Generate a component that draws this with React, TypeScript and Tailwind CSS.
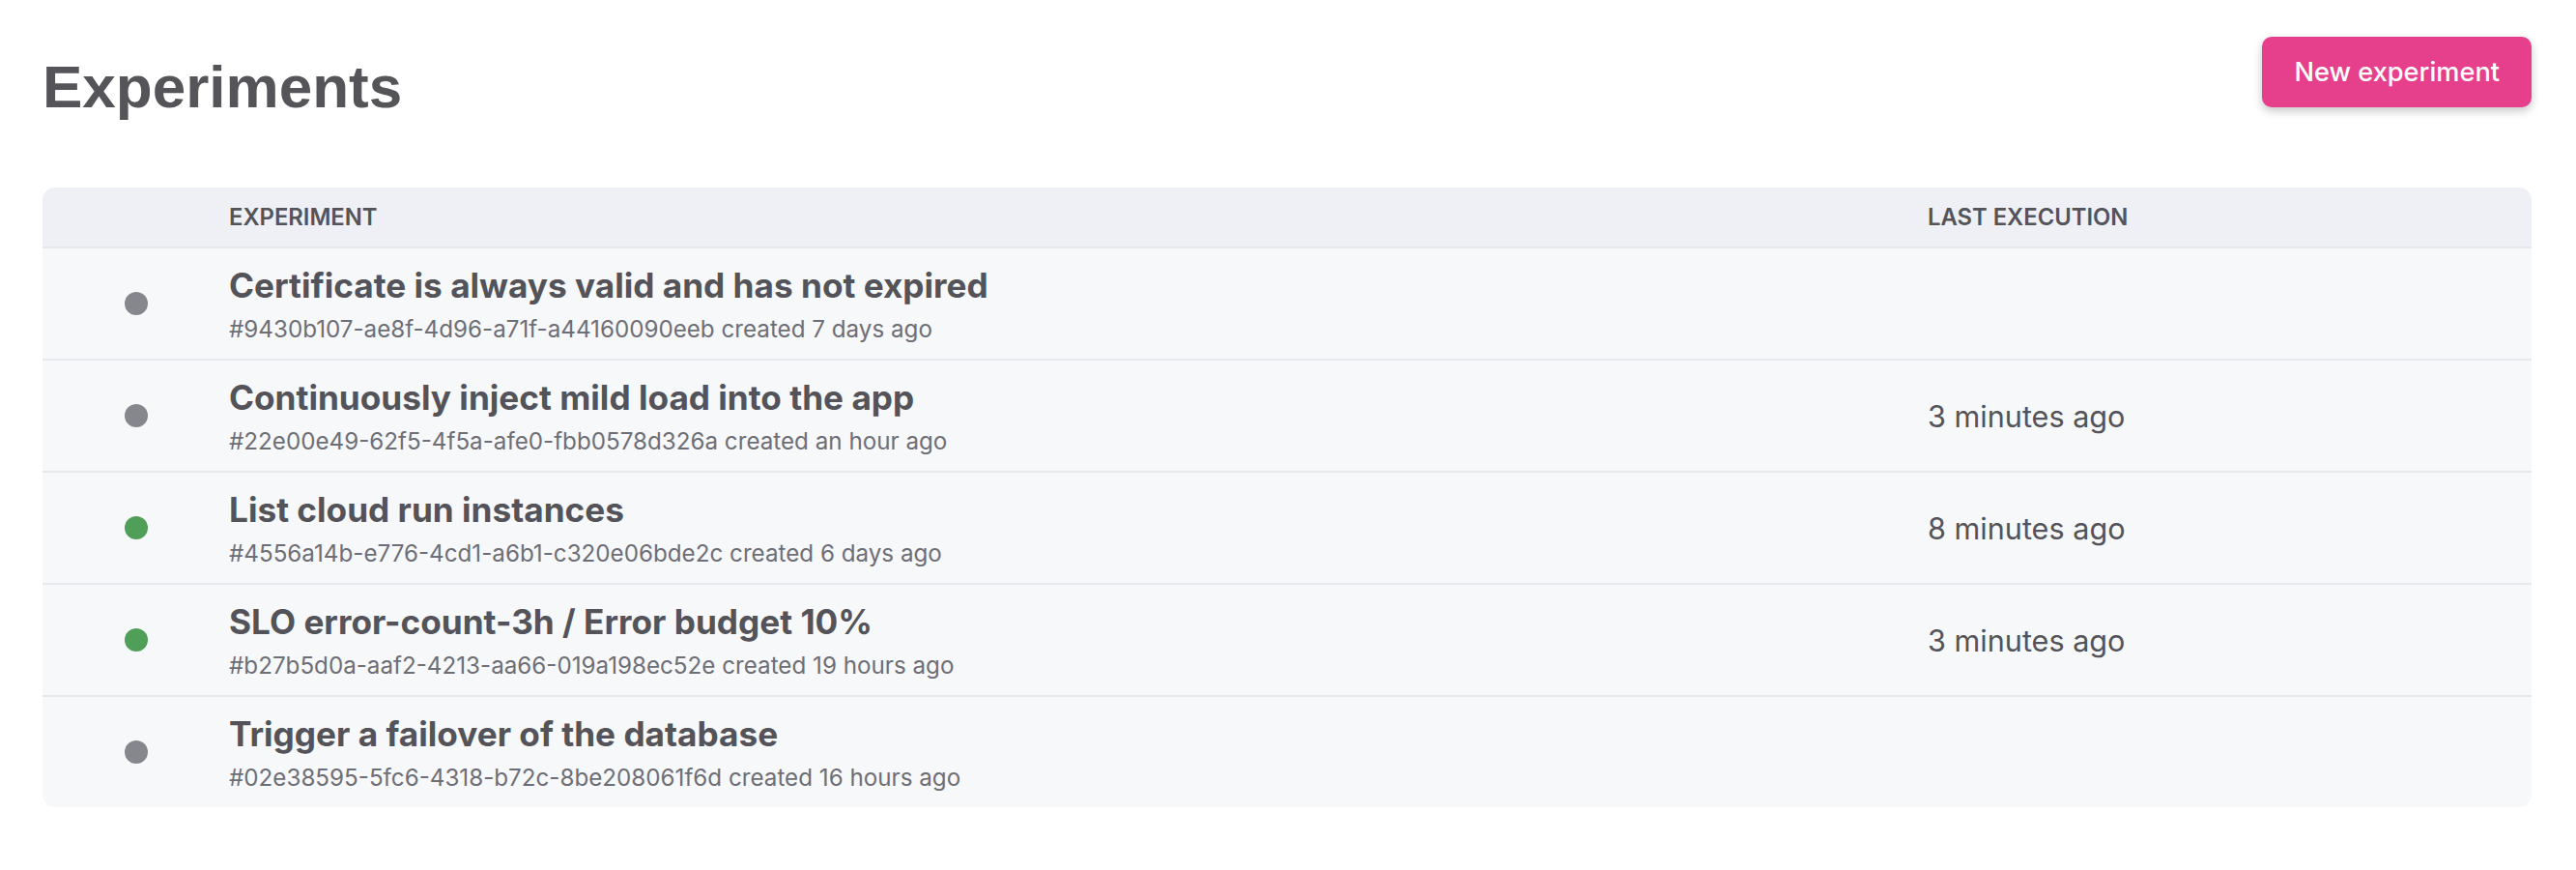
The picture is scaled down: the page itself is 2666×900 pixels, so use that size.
import React from 'react';

type Experiment = {
  id: string;
  name: string;
  created: string;
  lastExecution?: string;
  active: boolean;
};

const experiments: Experiment[] = [
  {
    id: '9430b107-ae8f-4d96-a71f-a44160090eeb',
    name: 'Certificate is always valid and has not expired',
    created: '7 days ago',
    active: false,
  },
  {
    id: '22e00e49-62f5-4f5a-afe0-fbb0578d326a',
    name: 'Continuously inject mild load into the app',
    created: 'an hour ago',
    lastExecution: '3 minutes ago',
    active: false,
  },
  {
    id: '4556a14b-e776-4cd1-a6b1-c320e06bde2c',
    name: 'List cloud run instances',
    created: '6 days ago',
    lastExecution: '8 minutes ago',
    active: true,
  },
  {
    id: 'b27b5d0a-aaf2-4213-aa66-019a198ec52e',
    name: 'SLO error-count-3h / Error budget 10%',
    created: '19 hours ago',
    lastExecution: '3 minutes ago',
    active: true,
  },
  {
    id: '02e38595-5fc6-4318-b72c-8be208061f6d',
    name: 'Trigger a failover of the database',
    created: '16 hours ago',
    active: false,
  },
];

function ExperimentRow({ experiment }: { experiment: Experiment }) {
  return (
    <div className="grid grid-cols-[193px_1fr_625px] items-center border-t-2 border-[#e7e8ee] bg-[#f7f8fa] h-[116px]">
      <div className="flex justify-center">
        <span
          className={`w-[24px] h-[24px] rounded-full ${
            experiment.active ? 'bg-[#4f9f58]' : 'bg-[#86868d]'
          }`}
        />
      </div>
      <div className="flex flex-col pt-[2px]">
        <span className="text-[35.2px] leading-[47.6px] font-bold text-[#535359]">
          {experiment.name}
        </span>
        <span className="mt-[4px] text-[24.2px] leading-[34px] text-[#6e6e76]">
          #{experiment.id} created {experiment.created}
        </span>
      </div>
      <div className="text-[30.6px] leading-[43px] text-[#535359]">
        {experiment.lastExecution}
      </div>
    </div>
  );
}

export default function App() {
  return (
    <div className="min-h-screen bg-white px-[44px] pt-[38px] font-['Inter',sans-serif] text-[#535359]">
      {/* Page header */}
      <div className="flex items-start justify-between pr-[2px]">
        <h1 className="mt-[17px] font-['Liberation_Sans',Arial,sans-serif] text-[62px] leading-[69px] font-bold text-[#545459]">
          Experiments
        </h1>
        <button className="rounded-[10px] bg-[#e6408c] px-[33px] py-[16px] text-[27.2px] leading-[41px] font-medium text-white shadow-[0_4px_10px_rgba(0,0,0,0.22)]">
          New experiment
        </button>
      </div>

      {/* Table */}
      <div className="mt-[70px] mr-[2px] overflow-hidden rounded-[13px]">
        <div className="grid grid-cols-[193px_1fr_625px] items-center bg-[#eff0f5] h-[61px]">
          <div />
          <div className="text-[23.8px] font-semibold uppercase text-[#535359]">Experiment</div>
          <div className="text-[23.8px] font-semibold uppercase text-[#535359]">Last execution</div>
        </div>
        {experiments.map((experiment) => (
          <ExperimentRow key={experiment.id} experiment={experiment} />
        ))}
      </div>
    </div>
  );
}
